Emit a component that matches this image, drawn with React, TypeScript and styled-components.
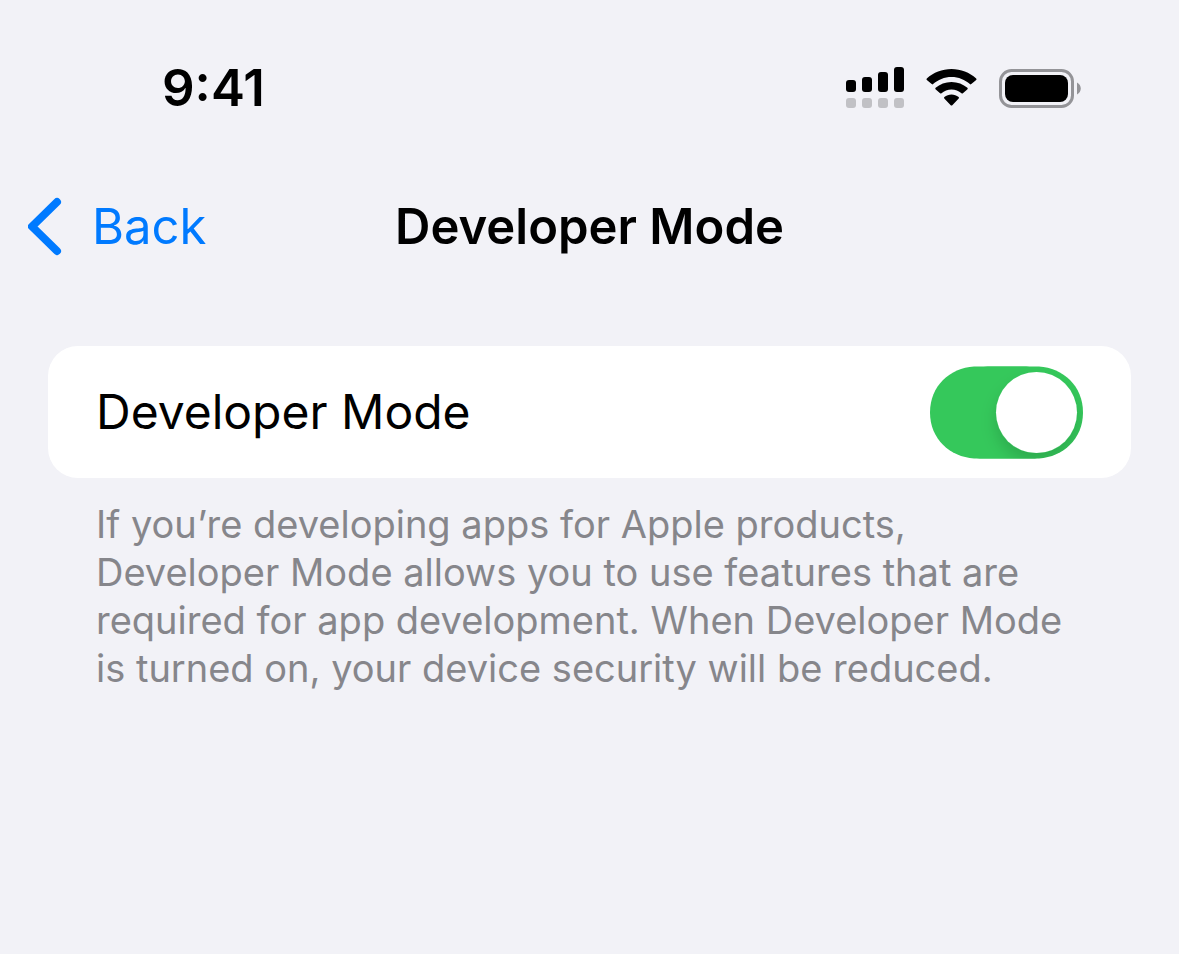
import React, { useState } from "react";
import styled, { createGlobalStyle } from "styled-components";

const GlobalStyle = createGlobalStyle`
  *, *::before, *::after { box-sizing: border-box; }
  body {
    margin: 0;
    background: #f2f2f7;
    color: #000;
    font-family: Inter, "Liberation Sans", sans-serif;
  }
`;

const Screen = styled.div`
  min-height: 100vh;
  background: #f2f2f7;
`;

const StatusBar = styled.div`
  display: flex;
  align-items: center;
  justify-content: space-between;
  height: 176px;
  padding: 0 98px 0 162px;
`;

const Time = styled.time`
  font-size: 51px;
  line-height: 60px;
  font-weight: 600;
`;

const StatusIcons = styled.div`
  display: flex;
  align-items: center;
  gap: 22px;
`;

const NavBar = styled.header`
  display: grid;
  grid-template-columns: 1fr auto 1fr;
  align-items: center;
  height: 102px;
  padding: 0 28px;
`;

const BackButton = styled.button`
  display: flex;
  align-items: center;
  justify-self: start;
  gap: 28px;
  padding: 0;
  border: 0;
  background: none;
  color: #007aff;
  font: inherit;
  font-size: 49px;
  line-height: 60px;
  cursor: pointer;
`;

const Title = styled.h1`
  margin: 0;
  font-size: 49px;
  line-height: 60px;
  font-weight: 600;
`;

const Content = styled.main`
  padding: 68px 48px;
`;

const SettingRow = styled.div`
  display: flex;
  align-items: center;
  justify-content: space-between;
  min-height: 132px;
  padding: 0 48px;
  border-radius: 30px;
  background: #fff;
`;

const SettingLabel = styled.label`
  font-size: 48px;
  line-height: 60px;
`;

const Switch = styled.span`
  position: relative;
  display: block;
  width: 153px;
  height: 93px;
`;

const SwitchInput = styled.input`
  position: absolute;
  inset: 0;
  width: 100%;
  height: 100%;
  margin: 0;
  opacity: 0;
  cursor: pointer;
`;

const SwitchArt = styled.svg`
  display: block;
`;

const Footnote = styled.p`
  margin: 0;
  padding: 22px 48px;
  color: #86868b;
  font-size: 38px;
  line-height: 48px;
`;

const TRACK = "M0 46.5C0 20 20 2 44 .6C56 0 97 0 109 .6C133 2 153 20 153 46.5C153 73 133 91 109 92.4C97 93 56 93 44 92.4C20 91 0 73 0 46.5Z";

function SignalIcon() {
  const bars = [12, 15, 20, 25];
  return (
    <svg width="58" height="42" viewBox="0 0 58 42" aria-hidden="true">
      {bars.map((h, i) => (
        <React.Fragment key={h}>
          <rect x={i * 16} y={25 - h} width="10" height={h} rx="3" />
          <rect x={i * 16} y="31" width="10" height="10" rx="3" fill="#c1c1c5" />
        </React.Fragment>
      ))}
    </svg>
  );
}

function WifiIcon() {
  return (
    <svg width="51" height="38" viewBox="0 0 51 38" aria-hidden="true">
      <path d="M25.5 8C32.6 8 39 10.7 43.9 15.1Q44.6 15.7 45.3 15.1L50.2 10.9Q50.9 10.2 50.2 9.5C43.5 3.5 34.9 0 25.5 0S7.5 3.5.8 9.5Q.1 10.2.8 10.9L5.7 15.1Q6.4 15.7 7.1 15.1C12 10.7 18.4 8 25.5 8Z" />
      <path d="M25.5 20.6C29.3 20.6 32.8 22 35.5 24.3Q36.2 24.9 36.9 24.3L41.5 20.2Q42.1 19.5 41.4 18.8C37.2 15.1 31.6 12.9 25.5 12.9S13.8 15.1 9.6 18.8Q8.9 19.5 9.5 20.2L14.1 24.3Q14.8 24.9 15.5 24.3C18.2 22 21.7 20.6 25.5 20.6Z" />
      <path d="M32.7 29.4Q33.4 28.7 32.6 28.1C30.6 26.5 28.1 25.6 25.5 25.6S20.4 26.5 18.4 28.1Q17.6 28.7 18.3 29.4L24.7 36.2Q25.5 37 26.3 36.2Z" />
    </svg>
  );
}

function BatteryIcon() {
  return (
    <svg width="82" height="40" viewBox="0 0 82 40" aria-hidden="true">
      <rect x="1.5" y="2.5" width="72" height="36" rx="11" fill="none" stroke="#949498" strokeWidth="3" />
      <rect x="6" y="7" width="63" height="27" rx="8" />
      <path d="M78 14.500C83 17 83 24 78 26.500Z" fill="#949498" />
    </svg>
  );
}

function ChevronIcon() {
  return (
    <svg width="36" height="60" viewBox="0 0 36 60" aria-hidden="true">
      <path d="M29 5L4 29.5L29 54" fill="none" stroke="currentColor" strokeWidth="8" strokeLinecap="round" strokeLinejoin="round" />
    </svg>
  );
}

function Toggle({ id, checked, onChange }: { id: string; checked: boolean; onChange: (on: boolean) => void }) {
  return (
    <Switch>
      <SwitchArt width="153" height="93" viewBox="0 0 153 93" aria-hidden="true">
        <defs>
          <clipPath id="track">
            <path d={TRACK} />
          </clipPath>
          <filter id="shadow" x="-50%" y="-50%" width="200%" height="200%">
            <feDropShadow dx="0" dy="9" stdDeviation="8" floodColor="#000" floodOpacity="0.15" />
          </filter>
        </defs>
        <path d={TRACK} fill={checked ? "#35c85b" : "#e9e9ea"} />
        <g clipPath="url(#track)">
          <circle cx={checked ? 106.5 : 46.5} cy="46.5" r="40.5" fill="#fff" filter="url(#shadow)" />
        </g>
      </SwitchArt>
      <SwitchInput id={id} type="checkbox" role="switch" checked={checked} onChange={(e) => onChange(e.target.checked)} />
    </Switch>
  );
}

export default function App() {
  const [enabled, setEnabled] = useState(true);
  return (
    <>
      <GlobalStyle />
      <Screen>
        <StatusBar>
          <Time>9:41</Time>
          <StatusIcons>
            <SignalIcon />
            <WifiIcon />
            <BatteryIcon />
          </StatusIcons>
        </StatusBar>
        <NavBar>
          <BackButton type="button">
            <ChevronIcon />
            Back
          </BackButton>
          <Title>Developer Mode</Title>
        </NavBar>
        <Content>
          <SettingRow>
            <SettingLabel htmlFor="developer-mode">Developer Mode</SettingLabel>
            <Toggle id="developer-mode" checked={enabled} onChange={setEnabled} />
          </SettingRow>
          <Footnote>
            If you’re developing apps for Apple products, Developer Mode allows you to use features that are required for
            app development. When Developer Mode is turned on, your device security will be reduced.
          </Footnote>
        </Content>
      </Screen>
    </>
  );
}
